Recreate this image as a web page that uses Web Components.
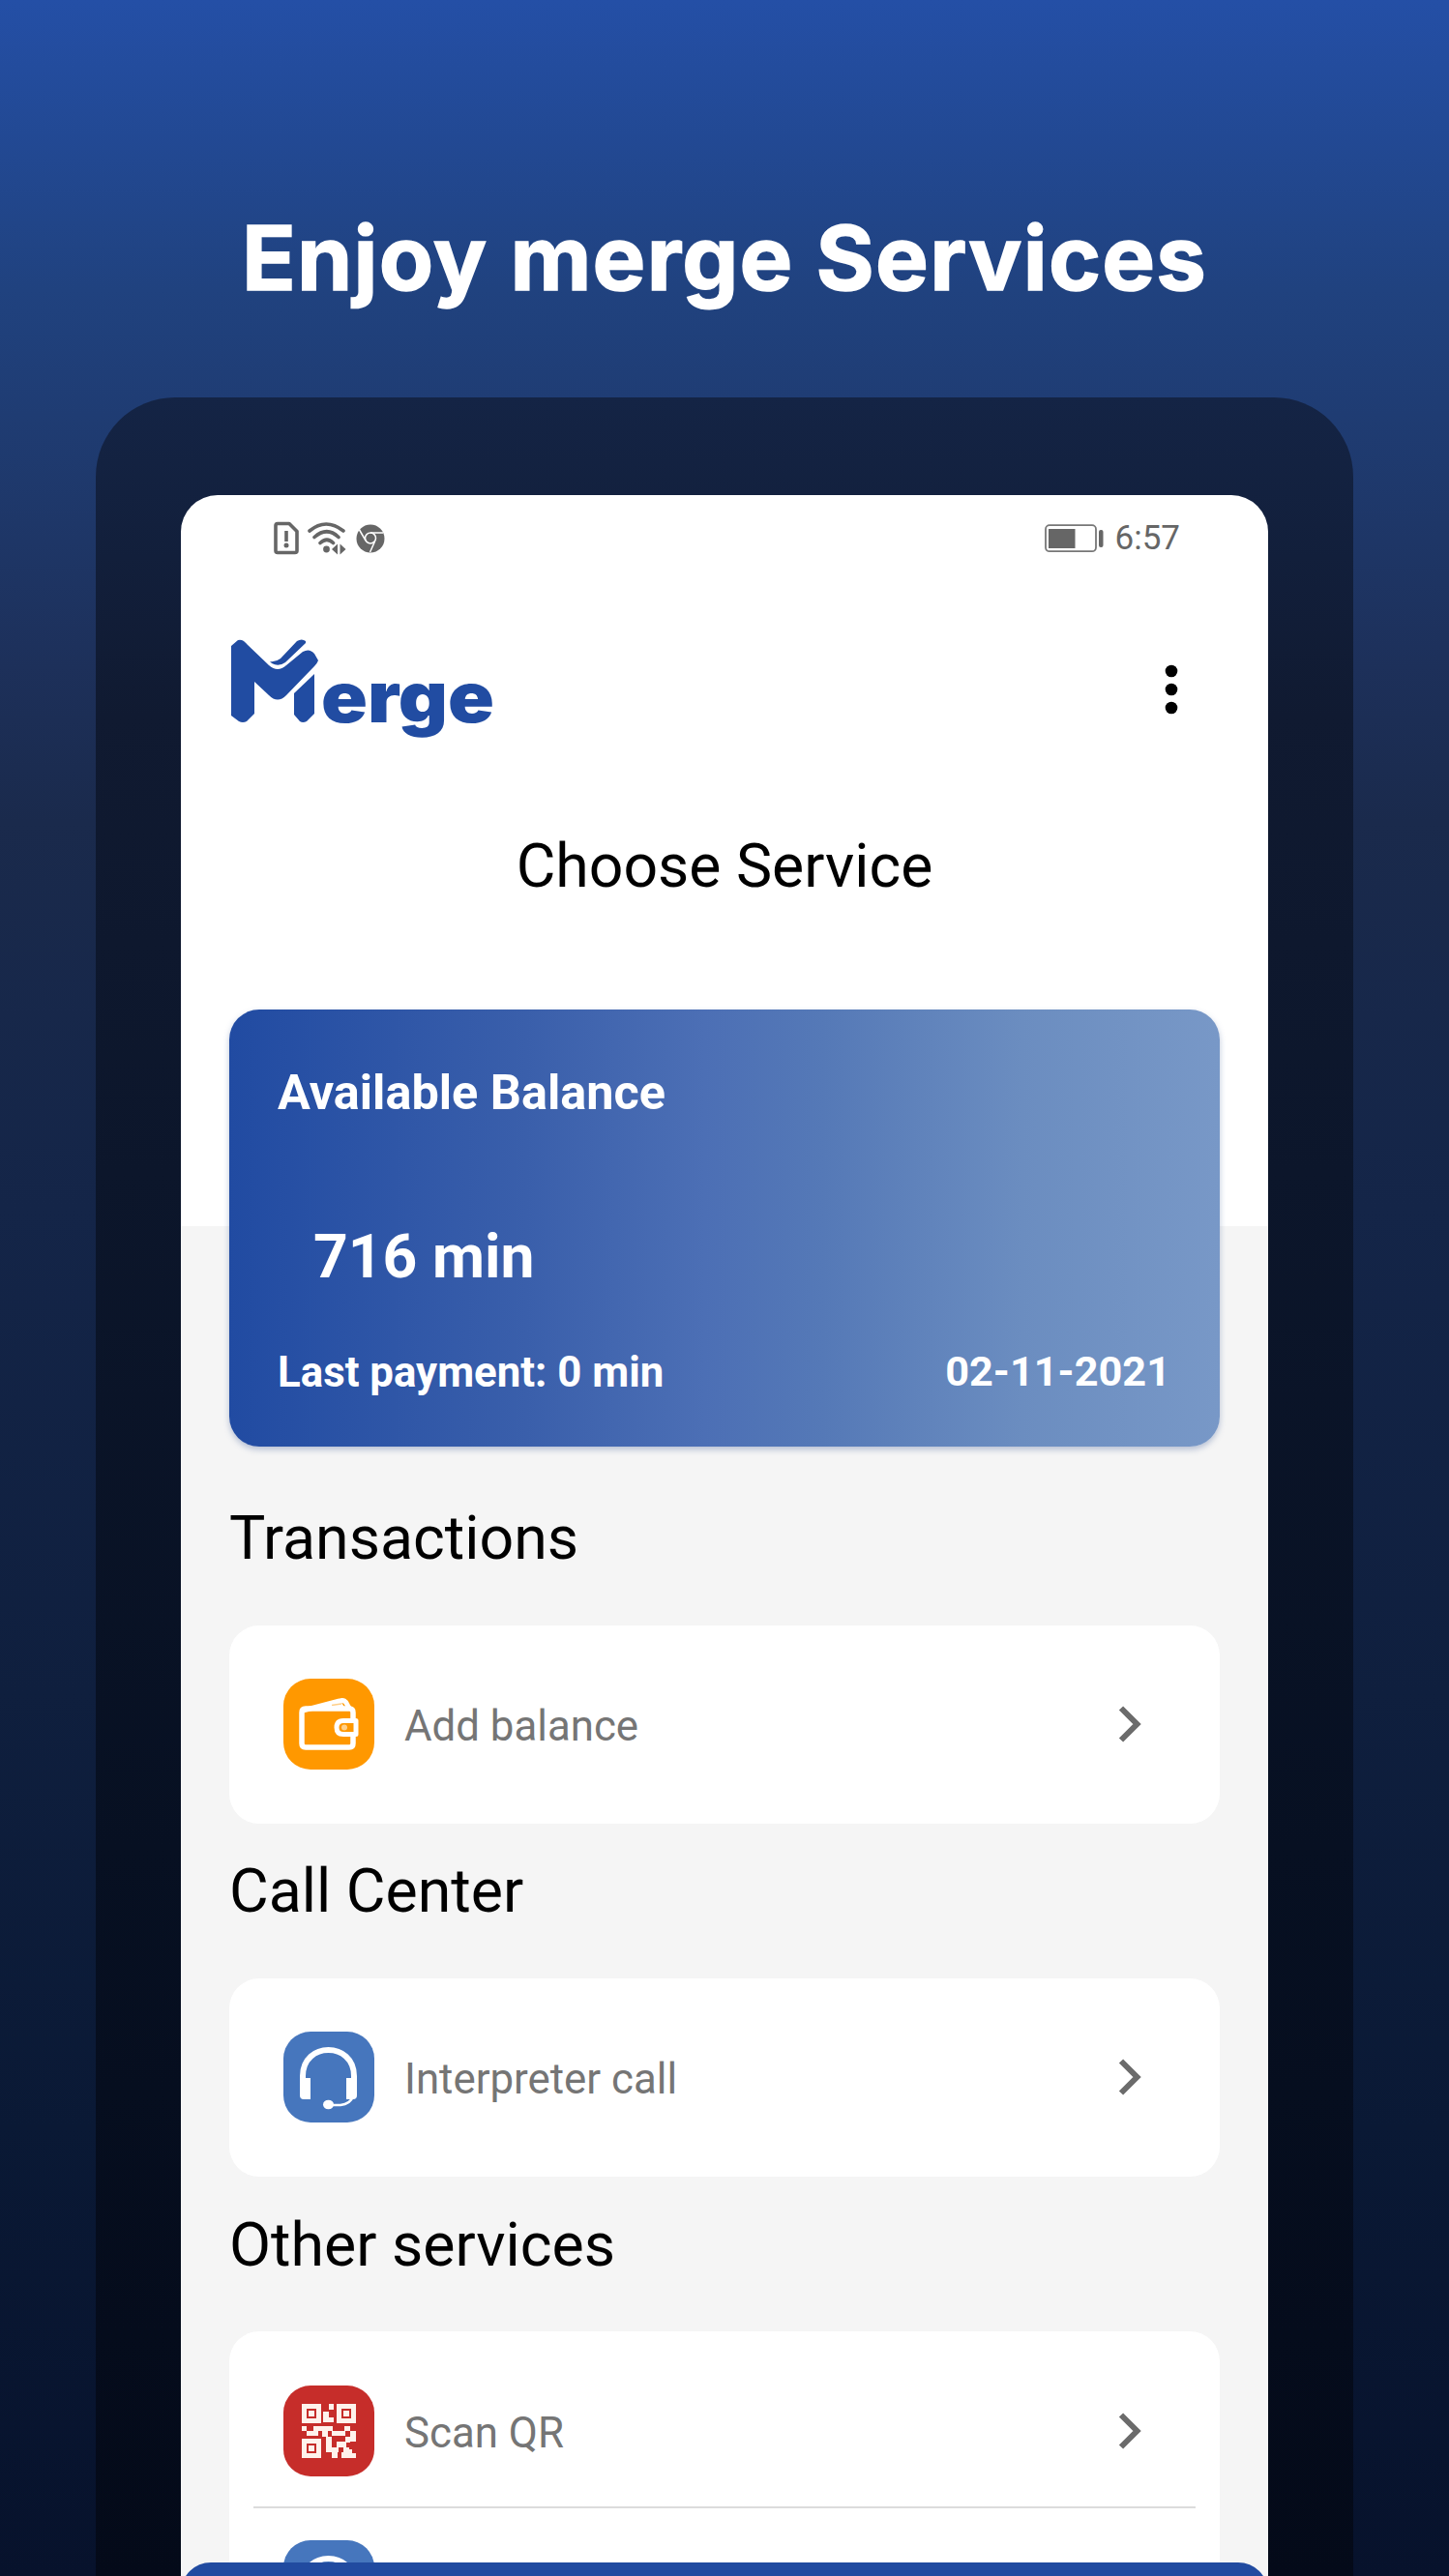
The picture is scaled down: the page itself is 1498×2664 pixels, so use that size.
<!DOCTYPE html>
<html lang="en">
<head>
<meta charset="utf-8">
<title>Merge</title>
<style>
    html, body {
        margin: 0;
        height: 2664px;
        overflow: hidden;
    }
    body {
        font-family: Roboto, "Liberation Sans", sans-serif;
        background: linear-gradient(180deg, #244fa6 0, #20427f 300px, #1d305a 690px, #1a2a4c 850px, #142548 1250px, #0f1f3e 1750px, #0a1935 2200px, #07122c 2664px);
    }
</style>
</head>
<body>
<promo-page>
    <span slot="title">Enjoy merge Services</span>
    <phone-frame>
        <status-bar time="6:57"></status-bar>
        <app-header>Choose Service</app-header>
        <balance-card minutes="716 min" payment="Last payment: 0 min" date="02-11-2021">Available Balance</balance-card>
        <service-group heading="Transactions">
            <service-row icon="wallet">Add balance</service-row>
        </service-group>
        <service-group heading="Call Center">
            <service-row icon="headset">Interpreter call</service-row>
        </service-group>
        <service-group heading="Other services">
            <service-row icon="qr">Scan QR</service-row>
            <service-row icon="headset"></service-row>
        </service-group>
        <bottom-bar slot="bottom"></bottom-bar>
    </phone-frame>
</promo-page>

<script>
/* Page */
class PromoPage extends HTMLElement {
    constructor() {
        super()
        this.attachShadow({ mode: 'open' })
        this.shadowRoot.innerHTML = `
        <style>
        :host {
            display: flex;
            flex-direction: column;
            align-items: center;
            width: 1498px;
            height: 2664px;
            overflow: hidden;
        }
        h1 {
            box-sizing: border-box;
            flex: none;
            height: 411px;
            margin: 0;
            padding-top: 207px;
            color: #fff;
            font: 700 92px/120px Inter, sans-serif;
            letter-spacing: 1.25px;
            white-space: nowrap;
            -webkit-text-stroke: 1.5px #fff;
        }
        </style>
        <h1><slot name="title"></slot></h1>
        <slot></slot>
        `
    }
}
customElements.define('promo-page', PromoPage)

/* Phone */
class PhoneFrame extends HTMLElement {
    constructor() {
        super()
        this.attachShadow({ mode: 'open' })
        this.shadowRoot.innerHTML = `
        <style>
        :host {
            box-sizing: border-box;
            display: block;
            flex: none;
            width: 1300px;
            height: 2253px;
            padding: 101px 88px 0;
            border-radius: 82px 82px 0 0;
            background: linear-gradient(180deg, #142445 0, #101a31 330px, #0c162b 800px, #071022 1500px, #040a19 2253px);
        }
        .screen {
            position: relative;
            box-sizing: border-box;
            height: 2152px;
            padding: 0 50px;
            overflow: hidden;
            border-radius: 38px 38px 0 0;
            background: linear-gradient(180deg, #fff 756px, #f5f5f5 756px);
        }
        </style>
        <div class="screen">
            <slot></slot>
            <slot name="bottom"></slot>
        </div>
        `
    }
}
customElements.define('phone-frame', PhoneFrame)

/* Status bar */
class StatusBar extends HTMLElement {
    constructor() {
        super()
        this.attachShadow({ mode: 'open' })
        this.shadowRoot.innerHTML = `
        <style>
        :host {
            display: flex;
            justify-content: space-between;
            align-items: center;
            height: 88px;
            padding: 0 41px 0 45px;
            color: #666;
            font-size: 35px;
        }
        div {
            display: flex;
            align-items: center;
        }
        svg {
            display: block;
        }
        .right {
            gap: 11px;
            padding-top: 1px;
        }
        </style>
        <div>
            <svg width="120" height="40" viewBox="0 0 120 40" fill="none" stroke="#666" stroke-width="3.6">
                <path d="M5 5.500h12l8 8v20q0 2-2 2H5q-2 0-2-2v-26q0-2 2-2z" stroke-linejoin="round"/>
                <path d="M14 13v11" />
                <circle cx="14" cy="28" r="2.500" fill="#666" stroke="none"/>
                <path d="M38 13Q55-1 73 13M43 19.500Q56 8 68 19.500M49 25.500Q56 19 62.500 25.500" stroke-linecap="round"/>
                <circle cx="55.500" cy="32" r="3.400" fill="#666" stroke="none"/>
                <path d="M61 32l6-5.500v11zM75.500 32l-6-5.500v11z" fill="#666" stroke="none"/>
                <circle cx="101" cy="21" r="14.500" fill="#666" stroke="none"/>
                <circle cx="101" cy="20.500" r="5.500" stroke="#fff" stroke-width="1.500"/>
                <path d="M101 15h13M96 23l-7-12M105.500 24l-5 11" stroke="#fff" stroke-width="1.500"/>
            </svg>
        </div>
        <div class="right">
            <svg width="62" height="30" viewBox="0 0 62 30">
                <rect x="1" y="1.200" width="52" height="27" rx="4" fill="#fff" stroke="#777" stroke-width="1.800"/>
                <rect x="4" y="5" width="27.500" height="20" fill="#666"/>
                <rect x="56" y="6" width="4.500" height="18" rx="2" fill="#666"/>
            </svg>
            <span>${this.getAttribute('time')}</span>
        </div>
        `
    }
}
customElements.define('status-bar', StatusBar)

/* Logo, menu and screen title */
class AppHeader extends HTMLElement {
    constructor() {
        super()
        this.attachShadow({ mode: 'open' })
        this.shadowRoot.innerHTML = `
        <style>
        :host {
            display: block;
            height: 444px;
        }
        .bar {
            display: flex;
            justify-content: space-between;
            height: 238px;
        }
        svg {
            display: block;
        }
        .logo {
            margin-top: 50px;
        }
        .menu {
            margin: 85px 42px 0 0;
        }
        h2 {
            margin: 0;
            font-weight: 400;
            font-size: 62.5px;
            line-height: 116px;
            text-align: center;
        }
        </style>
        <div class="bar">
            <svg class="logo" width="290" height="130" viewBox="0 0 290 130" fill="#214ca2">
                <path d="M2 90V18L9 12Q12 11 15 13L41 38Q50 46 59 38L76 24Q83 20 88 26L92 33Q91 36 88 39L59 69Q50 78 41 69L26 55V88L18 96Q14 98 10 96z"/>
                <path d="M42 34Q48 35 53 31L70 13Q75 10 79 13V15L58 35Q51 40 44 36z"/>
                <path d="M67 67L88 47V88L80 96Q76 98 73 96L67 89z"/>
                <text x="95" y="97" font-family="Inter, sans-serif" font-weight="900" font-size="73" textLength="179" lengthAdjust="spacingAndGlyphs">erge</text>
            </svg>
            <svg class="menu" width="16" height="56" viewBox="0 0 16 56">
                <circle cx="8" cy="9" r="6.300"/>
                <circle cx="8" cy="28" r="6.300"/>
                <circle cx="8" cy="47" r="6.300"/>
            </svg>
        </div>
        <h2><slot></slot></h2>
        `
    }
}
customElements.define('app-header', AppHeader)

/* Balance card */
class BalanceCard extends HTMLElement {
    constructor() {
        super()
        this.attachShadow({ mode: 'open' })
        this.shadowRoot.innerHTML = `
        <style>
        :host {
            box-sizing: border-box;
            display: flex;
            flex-direction: column;
            height: 452px;
            padding: 54px 51px 0 50px;
            border-radius: 31px;
            color: #fff;
            font-weight: 700;
            background: linear-gradient(90deg, #214ba2 0, #3a5fab 30%, #4c6fb5 48%, #5579b7 60%, #6b8dc0 80%, #7898c7 100%);
            box-shadow: 0 3px 6px rgba(60, 90, 150, 0.35);
        }
        .name {
            font-size: 50.4px;
            line-height: 64px;
        }
        .minutes {
            margin: 98px 0 0 37px;
            font-size: 62.4px;
            line-height: 80px;
        }
        .foot {
            display: flex;
            justify-content: space-between;
            margin-top: 51px;
            font-size: 43.8px;
            line-height: 56px;
        }
        .date {
            font-size: 43.3px;
        }
        </style>
        <span class="name"><slot></slot></span>
        <span class="minutes">${this.getAttribute('minutes')}</span>
        <div class="foot">
            <span>${this.getAttribute('payment')}</span>
            <span class="date">${this.getAttribute('date')}</span>
        </div>
        `
    }
}
customElements.define('balance-card', BalanceCard)

/* Group of services */
class ServiceGroup extends HTMLElement {
    constructor() {
        super()
        this.attachShadow({ mode: 'open' })
        this.shadowRoot.innerHTML = `
        <style>
        :host {
            display: block;
            height: 365.3px;
        }
        h3 {
            box-sizing: border-box;
            height: 184.500px;
            margin: 0;
            padding-top: 55px;
            font-weight: 400;
            font-size: 62.6px;
            line-height: 80px;
        }
        .card {
            border-radius: 31px;
            background: #fff;
        }
        </style>
        <h3>${this.getAttribute('heading')}</h3>
        <div class="card"><slot></slot></div>
        `
    }
}
customElements.define('service-group', ServiceGroup)

/* Service row */
const finder = (x, y) => `<path fill-rule="evenodd" d="M${x} ${y}h20v20h-20zM${x + 5} ${y + 5}v10h10v-10z"/><path d="M${x + 7} ${y + 7}h6v6h-6z"/>`
const icons = {
    wallet: ['#ff9800', `
        <path d="M20 33L58 23Q64 21 66 27L69 32" fill="none" stroke="#fff" stroke-width="5" stroke-linejoin="round"/>
        <path d="M30 31L59 23L64 31z" fill="#fff"/>
        <path d="M50 27.500L60 26" stroke="#ffcf87" stroke-width="1.500"/>
        <path d="M72 42V35Q72 31 68 31H23Q19 31 19 35V67Q19 71 23 71H68Q72 71 72 67V59" fill="none" stroke="#fff" stroke-width="5.500"/>
        <path d="M75 43.500H62Q55 43.500 55 50.500Q55 57.500 62 57.500H75z" fill="#ff9800" stroke="#fff" stroke-width="5" stroke-linejoin="round"/>
        <circle cx="63" cy="50.500" r="3" fill="#ffd08a"/>`],
    headset: ['#4676bd', `
        <path d="M20 51V46C20 10 73 10 73 46V51" fill="none" stroke="#fff" stroke-width="6"/>
        <path d="M17 48H28V70H21Q17 70 17 66zM65 48H76V66Q76 70 72 70H65z" fill="#fff"/>
        <path d="M72 67Q69 75 59 76H49" fill="none" stroke="#fff" stroke-width="2.500"/>
        <ellipse cx="46.500" cy="75.500" rx="5.500" ry="4.800" fill="#fff"/>`],
    qr: ['#c62d2a', `<g fill="#fff2ec">${finder(19, 19)}${finder(55, 19)}${finder(19, 55)}
        <path d="M47 19h5v6h-5zM41 27h6v6h5v5h-11zM19 42h5v5h-5zM24 47h7v5h-7zM31 42h20v5h-5v6h-6v-6h-4v5h-5zM50 47h14v5h-14zM63 42h6v5h-6zM69 47h6v11h-6zM64 53h5v6h-5zM44 53h6v16h-6zM55 58h10v6h-10zM50 64h7v5h-7zM62 64h6v5h-6zM50 69h6v6h-6zM60 69h8v-3h3v4h4v5h-15z"/></g>`],
}
class ServiceRow extends HTMLElement {
    constructor() {
        super()
        this.attachShadow({ mode: 'open' })
        const [color, glyph] = icons[this.getAttribute('icon')]
        this.shadowRoot.innerHTML = `
        <style>
        :host {
            box-sizing: border-box;
            display: flex;
            align-items: center;
            height: 205px;
            padding: 0 80px 0 56px;
            color: #757575;
            font-size: 43.8px;
            line-height: 60px;
        }
        :host(:not(:only-child)) {
            height: 183px;
            padding-top: 23px;
            background: linear-gradient(#dcdcdc, #dcdcdc) 50% 100% / 974px 2px no-repeat;
        }
        :host(:last-child:not(:only-child)) {
            height: 160px;
            padding-top: 0;
            background: none;
        }
        .icon {
            flex: none;
            width: 94px;
            height: 94px;
            border-radius: 28px;
            background: ${color};
        }
        svg {
            display: block;
        }
        .label {
            flex: 1;
            padding: 3px 0 0 31px;
        }
        </style>
        <svg class="icon" viewBox="0 0 94 94">${glyph}</svg>
        <span class="label"><slot></slot></span>
        <svg width="25" height="40" viewBox="0 0 25 40">
            <path d="M3 3.500L19.500 20L3 36.500" fill="none" stroke="#6b6b6b" stroke-width="6"/>
        </svg>
        `
    }
}
customElements.define('service-row', ServiceRow)

/* Bottom bar, lies over the list */
class BottomBar extends HTMLElement {
    constructor() {
        super()
        this.attachShadow({ mode: 'open' })
        this.shadowRoot.innerHTML = `
        <style>
        :host {
            position: absolute;
            left: 0;
            right: 0;
            bottom: 0;
            height: 14px;
            overflow: hidden;
        }
        div {
            height: 80px;
            border-radius: 31px;
            background: #214ba0;
        }
        </style>
        <div></div>
        `
    }
}
customElements.define('bottom-bar', BottomBar)
</script>
</body>
</html>
